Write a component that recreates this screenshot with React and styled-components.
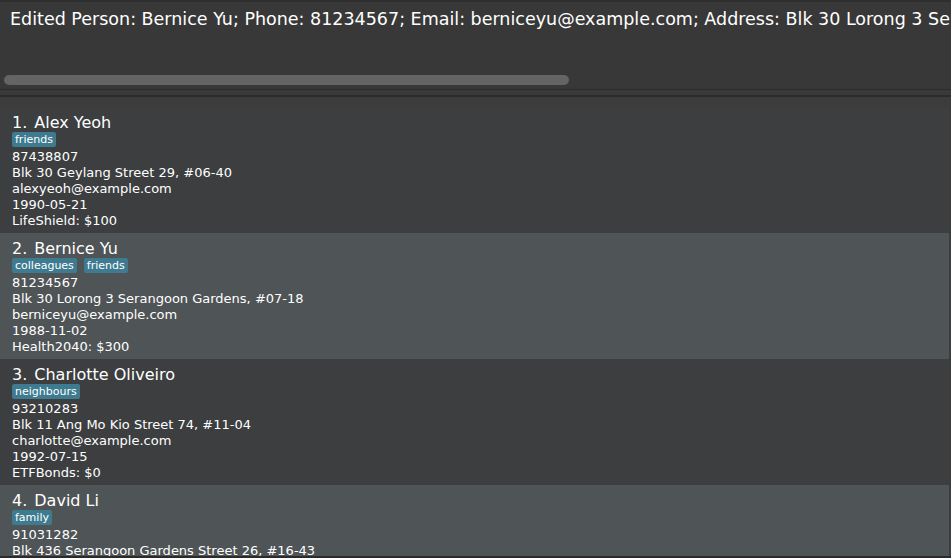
import React from "react";
import styled, { createGlobalStyle } from "styled-components";

const Global = createGlobalStyle`
  html, body { margin: 0; padding: 0; background: #383838; }
  body { font-family: "DejaVu Sans", sans-serif; overflow: hidden; }
  #root { width: 951px; height: 558px; overflow: hidden; }
`;

const Page = styled.div`
  width: 951px;
  height: 558px;
  display: flex;
  flex-direction: column;
  background: #383838;
  border-top: 2px solid #2e2e2e;
  box-sizing: border-box;
  overflow: hidden;
`;

const Result = styled.div`
  height: 87px;
  flex: none;
  display: flex;
  flex-direction: column;
  background: #383838;
  box-sizing: border-box;
  padding: 7px 0 0 10px;
  position: relative;
`;

const ResultText = styled.div`
  color: #ffffff;
  font-size: 17.5px;
  white-space: nowrap;
  line-height: 20px;
`;

const ScrollThumb = styled.div`
  position: absolute;
  left: 4px;
  top: 73px;
  width: 565px;
  height: 10px;
  border-radius: 5px;
  background: #646464;
`;

const Divider = styled.div`
  flex: none;
  height: 5px;
  background: #393939;
  border-top: 1px solid #2b2b2b;
  border-bottom: 2px solid #2b2b2b;
`;

const List = styled.div`
  flex: 1;
  display: flex;
  flex-direction: column;
  background: #3c3c3c;
  padding-top: 10px;
  padding-right: 2px;
  overflow: hidden;
  border-bottom: 2px solid #2b2b2b;
`;

const Card = styled.div`
  flex: none;
  height: 126px;
  box-sizing: border-box;
  padding: 6px 12px 0;
  background: ${(p) => (p.$odd ? "#4f5456" : "#3c3e3f")};
  display: flex;
  flex-direction: column;
`;

const Name = styled.div`
  display: flex;
  color: #ffffff;
  font-size: 16px;
  line-height: 19px;
  white-space: nowrap;
`;

const Index = styled.span`
  margin-right: 7px;
`;

const Tags = styled.div`
  display: flex;
  gap: 7px;
  margin: 0 0 2px;
`;

const Tag = styled.span`
  background: #3e7b91;
  color: #ffffff;
  font-size: 11px;
  line-height: 15px;
  padding: 0 3px;
  border-radius: 2px;
`;

const Line = styled.div`
  color: #ffffff;
  font-size: 13px;
  line-height: 16px;
  white-space: nowrap;
`;

const people = [
  {
    name: "Alex Yeoh",
    tags: ["friends"],
    phone: "87438807",
    address: "Blk 30 Geylang Street 29, #06-40",
    email: "alexyeoh@example.com",
    dob: "1990-05-21",
    policy: "LifeShield: $100",
  },
  {
    name: "Bernice Yu",
    tags: ["colleagues", "friends"],
    phone: "81234567",
    address: "Blk 30 Lorong 3 Serangoon Gardens, #07-18",
    email: "berniceyu@example.com",
    dob: "1988-11-02",
    policy: "Health2040: $300",
  },
  {
    name: "Charlotte Oliveiro",
    tags: ["neighbours"],
    phone: "93210283",
    address: "Blk 11 Ang Mo Kio Street 74, #11-04",
    email: "charlotte@example.com",
    dob: "1992-07-15",
    policy: "ETFBonds: $0",
  },
  {
    name: "David Li",
    tags: ["family"],
    phone: "91031282",
    address: "Blk 436 Serangoon Gardens Street 26, #16-43",
    email: "lidavid@example.com",
    dob: "1985-03-10",
    policy: "Savings: $200",
  },
];

export default function App() {
  return (
    <Page>
      <Global />
      <Result>
        <ResultText>
          Edited Person: Bernice Yu; Phone: 81234567; Email: berniceyu@example.com; Address: Blk 30 Lorong 3 Serangoon Gardens, #07-18; Tags: [colleagues][friends]
        </ResultText>
        <ScrollThumb />
      </Result>
      <Divider />
      <List>
        {people.map((p, i) => (
          <Card key={p.name} $odd={i % 2 === 1}>
            <Name>
              <Index>{i + 1}.</Index>
              {p.name}
            </Name>
            <Tags>
              {p.tags.map((t) => (
                <Tag key={t}>{t}</Tag>
              ))}
            </Tags>
            <Line>{p.phone}</Line>
            <Line>{p.address}</Line>
            <Line>{p.email}</Line>
            <Line>{p.dob}</Line>
            <Line>{p.policy}</Line>
          </Card>
        ))}
      </List>
    </Page>
  );
}
